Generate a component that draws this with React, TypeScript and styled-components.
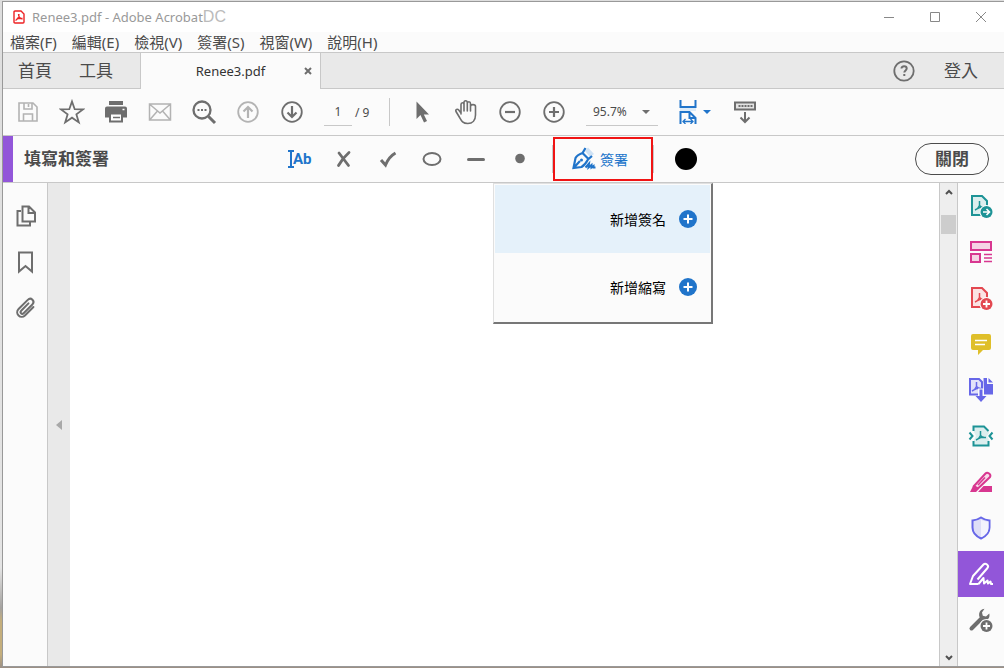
import React from "react";
import styled, { createGlobalStyle } from "styled-components";

const ink = "#6e6e6e";
const line = "#c8c8c8";
const blue = "#2074ca";
const purple = "#9256d9";
const panel = "#fbfbfb";

const GlobalStyle = createGlobalStyle`
  * { box-sizing: border-box; }
  body { margin: 0; background: #fff; font-family: "Noto Sans", "Noto Sans CJK TC", sans-serif; color: #4b4b4b; }
  button, input, select { font: inherit; color: inherit; }
  button { background: none; border: 0; padding: 0; cursor: pointer; }
  svg { display: block; flex: none; }
`;

const Desktop = styled.div`
  min-height: 100vh;
  display: flex;
  padding: 1px 0 1px 2px;
  background: linear-gradient(#dedede 0, #e4e4e4 85%, #a5a3a0 91%, #c4ae7c 93%, #c4ae7c 98%, #9b8f86 100%);
`;

const Window = styled.div`
  flex: 1;
  min-width: 0;
  display: flex;
  flex-direction: column;
  border: 1px solid #999;
  border-right: 0;
  background: #fff;
`;

const TitleBar = styled.header`
  display: flex;
  align-items: center;
  height: 30px;
  padding-left: 10px;
  color: #999;
`;

const TitleText = styled.h1`
  flex: 1;
  display: flex;
  align-items: center;
  margin: 0 0 0 7px;
  font-size: 13px;
  font-weight: 400;
  white-space: nowrap;
`;

const Edition = styled.span`
  font-family: "Liberation Sans", sans-serif;
  font-size: 16px;
  color: #bbb;
`;

const WindowButton = styled.button`
  width: 46px;
  height: 30px;
  display: grid;
  place-items: center;
`;

const MenuBar = styled.nav`
  display: flex;
  align-items: center;
  gap: 15px;
  height: 20px;
  padding-left: 7px;
  background: ${panel};
`;

const MenuItem = styled.button`
  font-size: 15px;
  line-height: 20px;
  white-space: nowrap;
`;

const TabBar = styled.nav`
  display: flex;
  height: 37px;
  background: #e9e9e9;
  border-top: 1px solid ${line};
`;

const TabGroup = styled.div<{ $end?: boolean }>`
  display: flex;
  align-items: center;
  gap: ${(p) => (p.$end ? 29 : 27)}px;
  padding: ${(p) => (p.$end ? "0 26px 0 0" : "0 27px 0 15px")};
  flex: ${(p) => (p.$end ? "1" : "none")};
  justify-content: flex-end;
  border-bottom: 1px solid ${line};
`;

const Tab = styled.button`
  font-size: 17px;
  line-height: 24px;
  white-space: nowrap;
`;

const ActiveTab = styled.div`
  flex: none;
  width: 181px;
  display: grid;
  grid-template-columns: 24px 1fr 24px;
  align-items: center;
  border: 1px solid ${line};
  border-width: 0 1px;
  background: ${panel};
`;

const TabTitle = styled.button`
  grid-column: 2;
  font-size: 13px;
  line-height: 20px;
  color: #333;
`;

const TabClose = styled.button`
  height: 24px;
  display: grid;
  place-items: center;
`;

const IconButton = styled.button`
  flex: none;
  width: 44px;
  height: 44px;
  display: grid;
  place-items: center;
`;

const ToolBar = styled.div`
  display: flex;
  align-items: center;
  height: 47px;
  padding-left: 3px;
  background: ${panel};
  border-bottom: 1px solid ${line};
`;

const PageField = styled.label`
  display: flex;
  align-items: center;
  gap: 3px;
  width: 65px;
  margin-left: 10px;
  font-size: 12px;
  white-space: nowrap;
`;

const PageInput = styled.input`
  width: 28px;
  height: 27px;
  padding: 0;
  border: 0;
  border-bottom: 1px solid ${line};
  background: none;
  text-align: center;
`;

const Divider = styled.span`
  flex: none;
  width: 1px;
  height: 28px;
  background: ${line};
`;

const ViewTools = styled.div`
  display: flex;
  margin: 0 10px;
`;

const ZoomField = styled.label`
  flex: none;
  display: flex;
  align-items: center;
  width: 72px;
  height: 28px;
  margin-right: 20px;
  padding-right: 8px;
  border-bottom: 1px solid ${line};
`;

const ZoomSelect = styled.select`
  flex: 1;
  min-width: 0;
  padding: 0 0 0 7px;
  border: 0;
  appearance: none;
  background: none;
  font-size: 12px;
`;

const FitButton = styled.button`
  flex: none;
  display: flex;
  align-items: center;
  gap: 5px;
  margin-right: 12px;
`;

const FillBar = styled.div`
  display: flex;
  align-items: center;
  height: 47px;
  padding-right: 15px;
  background: ${panel};
  border-bottom: 1px solid ${line};
`;

const FillTitle = styled.h2`
  flex: none;
  display: flex;
  align-items: center;
  align-self: stretch;
  width: 275px;
  margin: 0;
  padding-left: 11px;
  border-left: 10px solid ${purple};
  font-size: 17px;
  line-height: 24px;
  font-weight: 700;
`;

const SignGroup = styled.div`
  flex: none;
  display: flex;
  align-items: center;
  margin: 0 21px 0 10px;
`;

const SignArea = styled.div`
  position: relative;
`;

const SignButton = styled.button`
  display: flex;
  align-items: center;
  width: 100px;
  height: 44px;
  gap: 4px;
  padding-left: 17px;
  border: 2px solid #f01414;
  color: ${blue};
  font-size: 14px;
`;

const SignMenu = styled.div`
  position: absolute;
  z-index: 1;
  top: 46px;
  right: -60px;
  width: 220px;
  padding: 1px;
  background: ${panel};
  border: 1px solid #e0e0e0;
  border-right: 2px solid #777;
  border-bottom: 2px solid #777;
`;

const SignMenuItem = styled.button<{ $active?: boolean }>`
  display: flex;
  align-items: center;
  justify-content: flex-end;
  gap: 13px;
  width: 100%;
  height: 68px;
  padding-right: 13px;
  background: ${(p) => (p.$active ? "#e5f1fa" : panel)};
  color: #000;
  font-size: 14px;
`;

const ColorSwatch = styled.button`
  flex: none;
  width: 22px;
  height: 22px;
  border-radius: 50%;
  background: #000;
`;

const CloseButton = styled.button`
  width: 74px;
  height: 32px;
  margin-left: auto;
  border: 1px solid #4b4b4b;
  border-radius: 16px;
  font-size: 17px;
  line-height: 24px;
  font-weight: 700;
`;

const Workspace = styled.div`
  flex: 1;
  display: flex;
`;

const LeftRail = styled.nav`
  width: 45px;
  padding: 10px 0 0 1px;
  background: ${panel};
  border-right: 1px solid ${line};
`;

const CollapseStrip = styled.button`
  width: 22px;
  display: grid;
  place-items: center;
  background: #e9e9e9;
`;

const Page = styled.main`
  flex: 1;
  background: #fff;
`;

const Scrollbar = styled.div`
  display: flex;
  flex-direction: column;
  width: 19px;
  padding: 0 1px;
  background: #eeeeee;
  border: 1px solid ${line};
  border-width: 0 1px;
`;

const ScrollArrow = styled.button`
  height: 17px;
  display: grid;
  place-items: center;
`;

const Track = styled.div`
  flex: 1;
  padding-top: 15px;
`;

const Thumb = styled.div`
  height: 19px;
  background: #cdcdcd;
`;

const RightRail = styled.nav`
  width: 46px;
  background: ${panel};
`;

const RailButton = styled.button<{ $active?: boolean }>`
  width: 100%;
  height: 46px;
  display: grid;
  place-items: center;
  background: ${(p) => (p.$active ? purple : "transparent")};
`;

type SvgProps = { w?: number; h?: number; color?: string; sw?: number; children: React.ReactNode };

const Svg = ({ w = 24, h = 24, color = ink, sw = 2, children }: SvgProps) => (
  <svg width={w} height={h} viewBox={`0 0 ${w} ${h}`} fill="none" stroke={color} strokeWidth={sw} aria-hidden="true">
    {children}
  </svg>
);

const Caret = ({ color = ink }: { color?: string }) => (
  <Svg w={8} h={4}><path d="M0 0h8L4 4z" fill={color} stroke="none" /></Svg>
);

const Swoosh = ({ x, y }: { x: number; y: number }) => (
  <path transform={`translate(${x} ${y})`} strokeWidth="1.500" d="M4.500 0v4.500Q3.500 7.500 0 9M4.500 4.500Q6 7 10 6.500M2 7.800Q5 6.200 8 6.300" />
);

const PlusBadge = () => (
  <Svg w={18} h={18} color="#fff"><circle cx="9" cy="9" r="9" fill={blue} stroke="none" /><path d="M9 4.500v9M4.500 9h9" /></Svg>
);

const saveIcon = (
  <Svg color="#b3b3b3"><path d="M3 3h14l4 4v14H3zM8 3v6h8V3M7.500 21v-7h9v7M12.500 4v3" strokeWidth="1.600" /></Svg>
);
const starIcon = (
  <Svg w={26} h={26} sw={1.8}><path d="M13 2.500l2.700 7.700 8.300.2-6.600 5 2.400 8-6.800-4.700-6.800 4.700 2.400-8L2 10.400l8.300-.2z" /></Svg>
);
const printIcon = (
  <Svg>
    <path d="M5 1h14v4H5zM3 6.500h18q2 0 2 2v9h-4v-3H5v3H1v-9q0-2 2-2z" fill={ink} stroke="none" />
    <path d="M6 13.500h12v8H6z" fill="#fff" />
    <path d="M9 17.500h7" strokeWidth="1.500" /><path d="M18.500 9.500h2" stroke="#fff" strokeWidth="1.500" />
  </Svg>
);
const mailIcon = (
  <Svg color="#b3b3b3" sw={1.5}><path d="M1.500 4h21v16h-21zM2 4.500l10 8.500 10-8.500M2 19.500l7.500-8.500M22 19.500L14.500 11" /></Svg>
);
const searchIcon = (
  <Svg w={26} h={26}><circle cx="11" cy="11" r="8.500" strokeWidth="2.300" /><path d="M17.500 17.500l6.500 6.500" strokeWidth="3" /><path d="M6.500 11h2M10 11h2M13.500 11h2" /></Svg>
);
const upIcon = (
  <Svg color="#b3b3b3" sw={1.8}><circle cx="12" cy="12" r="9.800" /><path d="M12 18V7M7.500 11.500L12 7l4.500 4.500" strokeWidth="2.200" /></Svg>
);
const downIcon = (
  <Svg sw={1.8}><circle cx="12" cy="12" r="9.800" /><path d="M12 6v11M7.500 12.500L12 17l4.500-4.500" strokeWidth="2.200" /></Svg>
);
const pointerIcon = (
  <Svg><path d="M6.500 1.500v17.500l4-4 3.500 7.500 3-1.500-3.200-6.500H19z" fill={ink} stroke="none" /></Svg>
);
const handIcon = (
  <Svg w={26} h={26} sw={1.6}>
    <path d="M8 15V5.500c0-2.300 3-2.300 3 0V12M11 11V3.500c0-2.300 3.300-2.300 3.300 0V12M14.300 11V4.500c0-2.300 3.200-2.300 3.200 0V12M17.500 12V7.500c0-2.500 5-2.500 5 0V16c0 5-3 8.500-7.700 8.500-5 0-6.300-2.500-8.200-6l-3.600-6c-1-2 1.500-3 2.700-1.500L8 14" strokeLinecap="round" />
  </Svg>
);
const minusIcon = (
  <Svg sw={1.8}><circle cx="12" cy="12" r="9.800" /><path d="M7 12h10" strokeWidth="2.200" /></Svg>
);
const plusIcon = (
  <Svg sw={1.8}><circle cx="12" cy="12" r="9.800" /><path d="M7 12h10M12 7v10" strokeWidth="2.200" /></Svg>
);
const fitIcon = (
  <Svg w={20} h={24} color={blue}>
    <path d="M2 8h16v3H2z" fill="#dcebf8" stroke="none" />
    <path d="M2.500 0v7h15V0" /><path d="M2.500 24V12h9l6 6V24M11.500 12v6h6" />
    <path d="M5 21.500h10M7.500 19L5 21.500 7.500 24M12.500 19l2.500 2.500-2.500 2.500" strokeWidth="1.300" />
  </Svg>
);
const keyboardIcon = (
  <Svg><path d="M2 2.500h20v7H2z" fill="#e4e4e4" /><path d="M5.500 6h14" strokeDasharray="2 1" /><path d="M12 12v10M7.500 17.500L12 22l4.500-4.500" /></Svg>
);
const textIcon = (
  <svg width="26" height="20" viewBox="0 0 26 20" aria-hidden="true">
    <path d="M1 2h6M1 18h6M4 2v16" stroke={blue} strokeWidth="2" />
    <text x="6" y="15" fontFamily="Roboto, sans-serif" fontSize="15" fontWeight="700" fill={blue}>Ab</text>
  </svg>
);
const penIcon = (
  <Svg color={blue}>
    <path d="M13 4l3-3.500L22 7l-4 3z" fill="#cfe2f5" stroke="none" />
    <path d="M13.500 1L10.500 6Q5 8 3.500 11L1.500 21 9.500 20Q13 18 16 12.500L20 9M10.500 6l6 6M2 20.500l6-6.500" strokeWidth="2.200" />
    <circle cx="9.500" cy="13" r="1.500" fill={blue} stroke="none" />
    <path d="M13.500 20.500l3.500-4-.5 4 3-2.500v2.500l2-1.500v1.500h2" />
  </Svg>
);

const mainTools: [string, React.ReactNode][] = [
  ["儲存", saveIcon], ["星號", starIcon], ["列印", printIcon], ["郵件", mailIcon],
  ["尋找", searchIcon], ["上一頁", upIcon], ["下一頁", downIcon],
];
const viewTools: [string, React.ReactNode][] = [
  ["選取", pointerIcon], ["手形", handIcon], ["縮小", minusIcon], ["放大", plusIcon],
];
const fillTools: [string, React.ReactNode][] = [
  ["文字", textIcon],
  ["叉號", <Svg sw={2.8}><path d="M7 6l9.500 12.500M17 5.500C13 9 9 14 6.500 18.500" strokeLinecap="round" /></Svg>],
  ["勾號", <Svg sw={3}><path d="M5 13l4.500 5C12 12 15 8.500 19.500 6" /></Svg>],
  ["圓形", <Svg><ellipse cx="12" cy="12" rx="8.500" ry="6" /></Svg>],
  ["線條", <Svg sw={3}><path d="M4.500 12.500h15" strokeLinecap="round" /></Svg>],
  ["圓點", <Svg><circle cx="12" cy="11.500" r="4.800" fill={ink} stroke="none" /></Svg>],
];

const leftTools: [string, React.ReactNode][] = [
  ["頁面縮圖", <Svg><path d="M8.500 2.500h6.500l6 6v9H8.500zM14.500 3v6H21M7 7H3.500v14.500H16v-3" /></Svg>],
  ["書籤", <Svg><path d="M5 2.500h13v19l-6.500-5.500L5 21.500z" /></Svg>],
  ["附件", <Svg><path transform="rotate(45 12 12)" d="M16.500 6v12c0 6-9 6-9 0V5c0-4.500 6.500-4.500 6.500 0v12c0 3-3.500 3-3.500 0V7" strokeLinecap="round" /></Svg>],
];

const rightTools: [string, React.ReactNode][] = [
  ["轉存 PDF", <Svg w={26} h={26} color="#1d9396">
    <path d="M4 3h10l5 5v14H4z" fill="#dceeee" /><Swoosh x={7} y={8} />
    <circle cx="18.500" cy="19" r="7" fill={panel} stroke="none" /><circle cx="18.500" cy="19" r="6" fill="#1d9396" stroke="none" />
    <path d="M15 19h6M18.500 16l3 3-3 3" stroke="#fff" strokeWidth="1.600" /></Svg>],
  ["組織頁面", <Svg color="#d83790"><path d="M2 2h20v8H2zM2 14h9v8H2z" fill="#f5d3e5" /><path d="M15 14.500h8M15 18h8M15 21.500h8" strokeWidth="1.500" /></Svg>],
  ["建立 PDF", <Svg w={26} h={26} color="#e34850">
    <path d="M4 3h10l5 5v14H4z" fill="#fbe2e3" /><Swoosh x={7} y={8} />
    <circle cx="18.500" cy="19" r="7" fill={panel} stroke="none" /><circle cx="18.500" cy="19" r="6" fill="#e34850" stroke="none" />
    <path d="M15 19h7M18.500 15.500v7" stroke="#fff" strokeWidth="1.800" /></Svg>],
  ["註解", <Svg color="#fff"><path d="M4 2h16q2 0 2 2v12q0 2-2 2h-6l-5 5v-5H4q-2 0-2-2V4q0-2 2-2z" fill="#dfbf2a" stroke="none" /><path d="M6 8.500h12M6 12.500h10" strokeWidth="1.600" /></Svg>],
  ["合併檔案", <Svg w={26} h={26} color="#6767e8">
    <path d="M10 17.500H2V2h9l3 3v9" fill="#e2e2fa" /><path d="M15.500 1H19v6h6v10.500h-9z" fill="#6767e8" stroke="none" /><path d="M20.500 1l4.500 4.500h-4.500z" fill="#6767e8" stroke="none" /><Swoosh x={4} y={5} />
    <path d="M13 11.500v9" stroke={panel} strokeWidth="6" /><path d="M13 12.500v9" strokeWidth="3" /><path d="M7.500 19h11L13 25z" fill="#6767e8" stroke="none" /></Svg>],
  ["壓縮 PDF", <Svg w={26} h={26} color="#1d9396">
    <path d="M6 9V3.500h10l5 5V10l-2 3 2 4v5.500H6V17l2-4-2-4" fill="#dceeee" stroke="none" />
    <path d="M5.500 8V3.500H16l4.500 4.500M5.500 18v4.500h15V18" />
    <path d="M1.500 9.500L4.500 13l-3 3.500M24.500 9.500L21.500 13l3 3.500" /><Swoosh x={8} y={8} /></Svg>],
  ["編輯標記", <Svg color="#d83790"><path d="M5 16L16.500 3.500c2-2 6 1 4.500 3.500L9 18.500z" fill="#f8dbea" /><path d="M4 16L1 22h6l2.500-2.500L5 15.500M14.500 16H23v6H9z" fill="#d83790" stroke="none" /><path d="M9 15l7-7.500" strokeWidth="1.500" /></Svg>],
  ["保護", <Svg color="#6767e8"><path d="M12 1.500c3 2 5.500 2.800 8.500 3v7c0 5-3 8.500-8.500 11-5.500-2.500-8.500-6-8.500-11v-7c3-.2 5.500-1 8.500-3z" fill="#dedef7" /><path d="M12 3.500c2 1.500 4.500 2 7.500 2.200v5.800c0 4.500-2.500 7.500-7.500 9.800z" fill="#f4f4fd" stroke="none" /></Svg>],
  ["填寫和簽署", <Svg w={26} h={26} color="#fff"><path d="M10.500 23H2L5 15 15.500 3.500c2-2 6 1 4 3.500L9.500 18.500M10.500 23l5-6 .5 5.500 3.500-3 .5 3 2.500-2 .5 2.500h2" strokeLinejoin="round" /></Svg>],
  ["更多工具", <Svg w={26} h={26}>
    <path d="M3.500 21.500L13 12" strokeWidth="4" strokeLinecap="round" />
    <path d="M16.500 1.800L14 5.500l.8 3.200 3.200.8 3.300-3c1.200 5-2.800 8-6.800 6.300-5.500-2.300-4-10.500 2-11z" fill={ink} stroke="none" />
    <circle cx="18.500" cy="19" r="7" fill={panel} stroke="none" /><circle cx="18.500" cy="19" r="6" fill={ink} stroke="none" /><path d="M15 19h7M18.500 15.500v7" stroke="#fff" strokeWidth="1.800" /></Svg>],
];

const menus = ["檔案(F)", "編輯(E)", "檢視(V)", "簽署(S)", "視窗(W)", "說明(H)"];

const tools = (list: [string, React.ReactNode][]) =>
  list.map(([label, icon]) => <IconButton key={label} aria-label={label}>{icon}</IconButton>);

export default function App() {
  return (
    <Desktop>
      <GlobalStyle />
      <Window>
        <TitleBar>
          <Svg w={12} h={14} color="#ed2224" sw={1.4}><path d="M1 2q0-1 1-1h6l3 3v8q0 1-1 1H2q-1 0-1-1z" /><path d="M5.500 4c0 3 1 4.500 4 5M6 4c0 3-1 5-3.500 6.500M3 9.500c2-1.200 4-1.500 6.500-1" strokeWidth="1.300" /></Svg>
          <TitleText>Renee3.pdf - Adobe Acrobat<Edition>DC</Edition></TitleText>
          <WindowButton aria-label="最小化"><Svg w={10} h={10} color="#888" sw={1}><path d="M0 5.500h10" /></Svg></WindowButton>
          <WindowButton aria-label="最大化"><Svg w={10} h={10} color="#888" sw={1}><path d="M.5.5h9v9h-9z" /></Svg></WindowButton>
          <WindowButton aria-label="關閉視窗"><Svg w={10} h={10} color="#888" sw={1}><path d="M0 0l10 10M10 0L0 10" /></Svg></WindowButton>
        </TitleBar>
        <MenuBar>{menus.map((m) => <MenuItem key={m}>{m}</MenuItem>)}</MenuBar>
        <TabBar>
          <TabGroup><Tab>首頁</Tab><Tab>工具</Tab></TabGroup>
          <ActiveTab>
            <TabTitle>Renee3.pdf</TabTitle>
            <TabClose aria-label="關閉索引標籤"><Svg w={8} h={8}><path d="M1 1l6 6M7 1L1 7" /></Svg></TabClose>
          </ActiveTab>
          <TabGroup $end>
            <button aria-label="說明">
              <Svg w={22} h={22}><circle cx="11" cy="11" r="9.700" strokeWidth="1.800" /><path d="M8.500 8.500c0-3 5.200-2.800 5.200 0 0 1.800-2.400 2-2.400 4M11.300 14v2" /></Svg>
            </button>
            <Tab>登入</Tab>
          </TabGroup>
        </TabBar>
        <ToolBar>
          {tools(mainTools)}
          <PageField><PageInput aria-label="頁碼" defaultValue="1" />/ 9</PageField>
          <Divider />
          <ViewTools>{tools(viewTools)}</ViewTools>
          <ZoomField>
            <ZoomSelect aria-label="縮放比例"><option>95.7%</option></ZoomSelect>
            <Caret />
          </ZoomField>
          <FitButton aria-label="符合寬度">{fitIcon}<Caret color={blue} /></FitButton>
          <IconButton aria-label="工具列選項">{keyboardIcon}</IconButton>
        </ToolBar>
        <FillBar>
          <FillTitle>填寫和簽署</FillTitle>
          {tools(fillTools)}
          <SignGroup>
            <Divider />
            <SignArea>
              <SignButton>{penIcon}簽署</SignButton>
              <SignMenu>
                <SignMenuItem $active>新增簽名<PlusBadge /></SignMenuItem>
                <SignMenuItem>新增縮寫<PlusBadge /></SignMenuItem>
              </SignMenu>
            </SignArea>
            <Divider />
          </SignGroup>
          <ColorSwatch aria-label="色彩" />
          <CloseButton>關閉</CloseButton>
        </FillBar>
        <Workspace>
          <LeftRail>
            {leftTools.map(([label, icon]) => <RailButton key={label} aria-label={label}>{icon}</RailButton>)}
          </LeftRail>
          <CollapseStrip aria-label="收合面板"><Svg w={6} h={10}><path d="M6 0v10L0 5z" fill="#a8a8a8" stroke="none" /></Svg></CollapseStrip>
          <Page />
          <Scrollbar>
            <ScrollArrow aria-label="向上捲動"><Svg w={8} h={6} color="#505050"><path d="M1 5l3-3 3 3" /></Svg></ScrollArrow>
            <Track><Thumb /></Track>
            <ScrollArrow aria-label="向下捲動"><Svg w={8} h={6} color="#505050"><path d="M1 1l3 3 3-3" /></Svg></ScrollArrow>
          </Scrollbar>
          <RightRail>
            {rightTools.map(([label, icon]) => (
              <RailButton key={label} aria-label={label} $active={label === "填寫和簽署"}>{icon}</RailButton>
            ))}
          </RightRail>
        </Workspace>
      </Window>
    </Desktop>
  );
}
